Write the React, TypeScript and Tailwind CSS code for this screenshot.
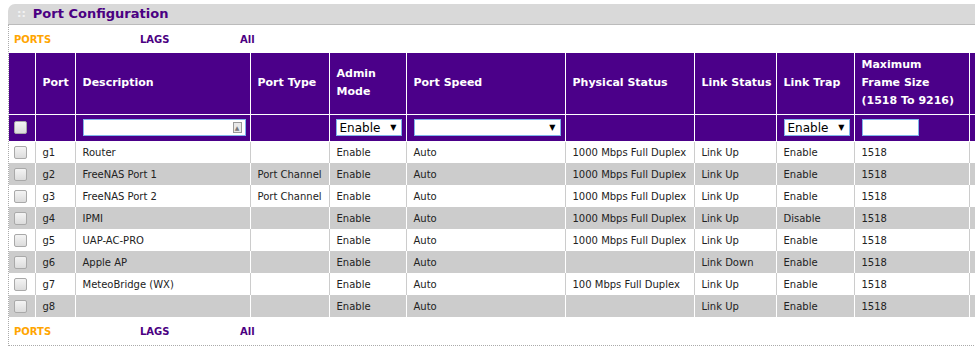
const rows = [
  { port: 'g1', desc: 'Router', type: '', admin: 'Enable', speed: 'Auto', phys: '1000 Mbps Full Duplex', link: 'Link Up', trap: 'Enable', frame: '1518' },
  { port: 'g2', desc: 'FreeNAS Port 1', type: 'Port Channel', admin: 'Enable', speed: 'Auto', phys: '1000 Mbps Full Duplex', link: 'Link Up', trap: 'Enable', frame: '1518' },
  { port: 'g3', desc: 'FreeNAS Port 2', type: 'Port Channel', admin: 'Enable', speed: 'Auto', phys: '1000 Mbps Full Duplex', link: 'Link Up', trap: 'Enable', frame: '1518' },
  { port: 'g4', desc: 'IPMI', type: '', admin: 'Enable', speed: 'Auto', phys: '1000 Mbps Full Duplex', link: 'Link Up', trap: 'Disable', frame: '1518' },
  { port: 'g5', desc: 'UAP-AC-PRO', type: '', admin: 'Enable', speed: 'Auto', phys: '1000 Mbps Full Duplex', link: 'Link Up', trap: 'Enable', frame: '1518' },
  { port: 'g6', desc: 'Apple AP', type: '', admin: 'Enable', speed: 'Auto', phys: '', link: 'Link Down', trap: 'Enable', frame: '1518' },
  { port: 'g7', desc: 'MeteoBridge (WX)', type: '', admin: 'Enable', speed: 'Auto', phys: '100 Mbps Full Duplex', link: 'Link Up', trap: 'Enable', frame: '1518' },
  { port: 'g8', desc: '', type: '', admin: 'Enable', speed: 'Auto', phys: '', link: 'Link Up', trap: 'Enable', frame: '1518' },
];

const Box = () => (
  <span className="block w-[13px] h-[13px] rounded-[2px] border border-[#a9a9a9] bg-gradient-to-b from-[#f4f4f4] to-[#dcdcdc]" />
);

const Select = ({ value, w }: { value: string; w: string }) => (
  <div className={`${w} h-[17px] bg-white border border-[#7eb4ea] flex items-center justify-between pl-[3px] pr-[4px] text-[12px] text-black`}>
    <span>{value}</span>
    <span className="text-[8px]">▼</span>
  </div>
);

const Links = () => (
  <div className="flex text-[10px] font-bold h-[28px] items-center">
    <span className="w-[131px] pl-[5px] text-[#ffa500]">PORTS</span>
    <span className="w-[100px] text-[#4b0082]">LAGS</span>
    <span className="text-[#4b0082]">All</span>
  </div>
);

const App = () => {
  return (
    <div className="w-[975px] h-[357px] bg-white overflow-hidden pt-[4px] pl-[8px] font-['DejaVu_Sans',sans-serif]">
      <div className="w-[1000px]">
        <div className="h-[21px] bg-[#d9d9d9] rounded-tl-[7px] border-b border-[#bbbbbb] flex items-center pl-[9px]">
          <span className="text-[#f2f2f2] text-[11px] font-bold mr-[7px]">::</span>
          <span className="text-[#4b0082] text-[13px] font-bold">Port Configuration</span>
        </div>
        <div className="border-l border-b border-dotted border-[#aaaaaa]">
          <Links />
          <table className="table-fixed border-collapse text-[10px] w-[1000px]">
            <colgroup>
              <col className="w-[26px]" />
              <col className="w-[40px]" />
              <col className="w-[175px]" />
              <col className="w-[79px]" />
              <col className="w-[77px]" />
              <col className="w-[159px]" />
              <col className="w-[129px]" />
              <col className="w-[82px]" />
              <col className="w-[78px]" />
              <col className="w-[115px]" />
              <col />
            </colgroup>
            <thead>
              <tr className="h-[61px] bg-[#4b0089] text-white text-[11px] font-bold text-left leading-[18px]">
                <th className="border border-white border-t-0 border-l-0" />
                <th className="border border-white border-t-0 pl-[7px]">Port</th>
                <th className="border border-white border-t-0 pl-[7px]">Description</th>
                <th className="border border-white border-t-0 pl-[7px]">Port Type</th>
                <th className="border border-white border-t-0 pl-[7px]">Admin<br />Mode</th>
                <th className="border border-white border-t-0 pl-[7px]">Port Speed</th>
                <th className="border border-white border-t-0 pl-[7px]">Physical Status</th>
                <th className="border border-white border-t-0 pl-[7px]">Link Status</th>
                <th className="border border-white border-t-0 pl-[7px]">Link Trap</th>
                <th className="border border-white border-t-0 pl-[7px]">Maximum<br />Frame Size<br />(1518 To 9216)</th>
                <th className="border border-white border-t-0" />
              </tr>
              <tr className="h-[27px] bg-[#4b0089]">
                <td className="border border-white border-l-0 pl-[5px]"><Box /></td>
                <td className="border border-white" />
                <td className="border border-white pl-[7px]">
                  <div className="w-[163px] h-[17px] bg-white border border-[#7eb4ea] flex items-center justify-end pr-[3px]">
                    <span className="w-[9px] h-[11px] border border-[#999] bg-[#e8e8e8] flex items-center justify-center text-[6px] text-[#777] leading-none">▲</span>
                  </div>
                </td>
                <td className="border border-white" />
                <td className="border border-white pl-[6px]"><Select value="Enable" w="w-[66px]" /></td>
                <td className="border border-white pl-[7px]"><Select value="" w="w-[147px]" /></td>
                <td className="border border-white" />
                <td className="border border-white" />
                <td className="border border-white pl-[7px]"><Select value="Enable" w="w-[66px]" /></td>
                <td className="border border-white pl-[7px]">
                  <div className="w-[57px] h-[17px] bg-white border border-[#7eb4ea]" />
                </td>
                <td className="border border-white" />
              </tr>
            </thead>
            <tbody className="text-[#222222]">
              {rows.map((r, i) => {
                const even = i % 2 === 1;
                const cell = even ? 'border-x border-white' : 'border-x border-[#cccccc]';
                return (
                  <tr key={r.port} className={`h-[22px] ${even ? 'bg-[#cccccc]' : 'bg-white'}`}>
                    <td className="pl-[5px]"><Box /></td>
                    <td className={`${cell} pl-[7px]`}>{r.port}</td>
                    <td className={`${cell} pl-[7px]`}>{r.desc}</td>
                    <td className={`${cell} pl-[7px]`}>{r.type}</td>
                    <td className={`${cell} pl-[7px]`}>{r.admin}</td>
                    <td className={`${cell} pl-[7px]`}>{r.speed}</td>
                    <td className={`${cell} pl-[7px]`}>{r.phys}</td>
                    <td className={`${cell} pl-[7px]`}>{r.link}</td>
                    <td className={`${cell} pl-[7px]`}>{r.trap}</td>
                    <td className={`${cell} pl-[7px]`}>{r.frame}</td>
                    <td className={cell} />
                  </tr>
                );
              })}
            </tbody>
          </table>
          <Links />
        </div>
      </div>
    </div>
  );
};

export default App;
